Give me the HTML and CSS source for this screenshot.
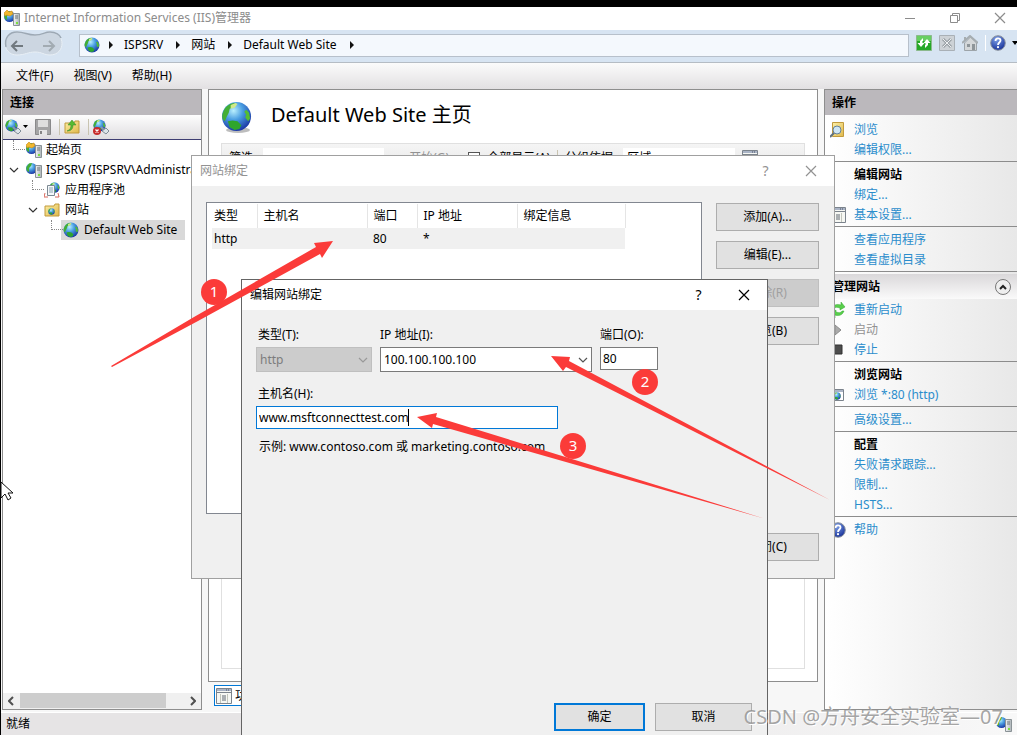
FILE: index.html
```html
<!DOCTYPE html>
<html lang="zh-CN">
<head>
<meta charset="utf-8">
<title>Internet Information Services (IIS)管理器</title>
<link rel="stylesheet" href="styles.css">
</head>
<body>
<svg class="defs" width="0" height="0" aria-hidden="true">
  <defs>
    <radialGradient id="sea" cx="40%" cy="30%" r="70%">
      <stop offset="0" stop-color="#b9effd"/><stop offset=".45" stop-color="#4a9fe2"/><stop offset="1" stop-color="#1c3aa6"/>
    </radialGradient>
    <linearGradient id="tower" x2="1"><stop offset="0" stop-color="#f2f4f5"/><stop offset="1" stop-color="#aab2b6"/></linearGradient>
    <linearGradient id="folder" y2="1"><stop offset="0" stop-color="#fdf0a6"/><stop offset="1" stop-color="#dfb84c"/></linearGradient>
    <radialGradient id="help" cx="40%" cy="25%" r="80%"><stop offset="0" stop-color="#7d9fe8"/><stop offset="1" stop-color="#132c94"/></radialGradient>
    <symbol id="globe" viewBox="0 0 32 32">
      <circle cx="16" cy="16" r="15" fill="url(#sea)"/>
      <path d="M2 12C4 6 8 3 13 2l3 1-2 3-5 2-1 4-2 4-2 5-2-2C1 17 1 14 2 12Z" fill="#43ae35"/>
      <path d="M7 21l5-1 5 1 4 4-2 4-5 1-5-3Z" fill="#2fa62d"/>
      <path d="M26 9l3 3 1 6-2 3-3-4 1-3-2-3Z" fill="#54bd32"/>
      <path d="M10 4l5-2 2 1-3 4-4 1Z" fill="#cfe98a"/>
    </symbol>
    <symbol id="server" viewBox="0 0 16 16">
      <circle cx="5.500" cy="6.500" r="5.500" fill="url(#sea)"/>
      <path d="M.5 5 3 1.500l3-.5-1 3-2 2 0 4C1 9 0 8 .5 5Z" fill="#43ae35"/>
      <path d="M9.500 3.500h6v12h-6Z" fill="url(#tower)" stroke="#8a9296"/>
      <path d="M11 6h3M11 8h3" stroke="#6e777b"/><path d="M12 13h2" stroke="#7be03d" stroke-width="2"/>
    </symbol>
    <symbol id="start" viewBox="0 0 16 16">
      <use href="#server"/><path d="M0 3 3 0l2 2 3-1 1 3-3 2-3-1-2 1Z" fill="#f1b82e" stroke="#c78613" stroke-width=".6"/>
    </symbol>
    <symbol id="folder-icon" viewBox="0 0 16 16">
      <path d="M1 4h9l1-2h4v12H1Z" fill="url(#folder)" stroke="#c19a3d"/>
    </symbol>
    <symbol id="help-icon" viewBox="0 0 16 16">
      <circle cx="8" cy="8" r="7.300" fill="url(#help)" stroke="#8b929d"/>
      <path d="M5.500 6c0-3.500 5-3.500 5-.5C10.500 7.500 8 7.500 8 10" fill="none" stroke="#fff" stroke-width="1.800"/><circle cx="8" cy="12.200" r="1.100" fill="#fff"/>
    </symbol>
    <symbol id="window-icon" viewBox="0 0 16 16">
      <path d="M.5.500h15v15H.5Z" fill="#f6f7f3" stroke="#7b838c"/><path d="M1 2h14" stroke="#aab4c6" stroke-width="2"/>
      <path d="M1 4.500h14" stroke="#7b838c"/><path d="M4.500 6v9M11.500 6v9" stroke="#c2c5bb"/><path d="M6 8h4M6 10h4M6 12h4" stroke="#5e6670"/>
      <path d="M10 2h1M12 2h1" stroke="#4a5365"/>
    </symbol>
    <symbol id="connect" viewBox="0 0 16 16">
      <use href="#globe" width="13" height="13"/><path d="M8 8l4 4" stroke="#8c9aa5" stroke-width="2"/><path d="M9 12l4-3 3 3-3 3Z" fill="#dce4e9" stroke="#7f8c97"/>
    </symbol>
    <symbol id="chevron" viewBox="0 0 10 6"><path d="M1 1l4 4 4-4" fill="none" stroke="currentColor" stroke-width="1.200"/></symbol>
    <symbol id="close" viewBox="0 0 12 12"><path d="M1 1l10 10M11 1 1 11" stroke="currentColor" stroke-width="1.200"/></symbol>
    <symbol id="tri" viewBox="0 0 5 8"><path d="M1 0v8l4-4Z" fill="#111"/></symbol>
  </defs>
</svg>

<div class="screen">
<main class="app">
  <header class="titlebar">
    <svg class="i16"><use href="#start"/></svg>
    <h1>Internet Information Services (IIS)管理器</h1>
    <div class="window-tools">
      <button aria-label="最小化"><svg width="12" height="12"><path d="M1 6.500h10" stroke="currentColor"/></svg></button>
      <button aria-label="还原"><svg width="12" height="12"><path d="M1.500 3.500h7v7h-7ZM3.500 3V1.500h7v7H9" fill="none" stroke="currentColor"/></svg></button>
      <button aria-label="关闭"><svg width="12" height="12"><use href="#close"/></svg></button>
    </div>
  </header>
  <nav class="addressbar">
    <svg class="travel" width="62" height="30">
      <path d="M14 2c8 0 10 3 18 3s9-3 15-3c16 0 16 23 0 23-6 0-8-3-15-3s-10 3-18 3C-2 25-2 2 14 2Z" fill="#ccd6e1" stroke="#e9f0f6"/>
      <path d="M3 17C1 8 6 2 14 2c8 0 10 3 18 3s9-3 15-3c6 0 10 3 11 6" fill="none" stroke="#9ca8b4" stroke-width="1.500"/>
      <path d="M20 16H9M14 11l-5 5 5 5" fill="none" stroke="#71797f" stroke-width="2"/>
      <path d="M40 16h11M46 11l5 5-5 5" fill="none" stroke="#a2abb2" stroke-width="2"/>
    </svg>
    <div class="crumbs">
      <svg class="i16"><use href="#globe"/></svg>
      <svg class="tri"><use href="#tri"/></svg><span>ISPSRV</span>
      <svg class="tri"><use href="#tri"/></svg><span>网站</span>
      <svg class="tri"><use href="#tri"/></svg><span>Default Web Site</span>
      <svg class="tri"><use href="#tri"/></svg>
    </div>
    <div class="nav-tools">
      <button aria-label="刷新"><svg class="i16" viewBox="0 0 16 16"><path d="M.5.500h15v15H.5Z" fill="#25a829" stroke="#8bb98c"/><path d="M1 1h14v5H1Z" fill="#68cf62"/><path d="M7 3 4 6v2H1.500l3.500 4 3.500-4H6.500V6H7ZM9 13l3-3V8h2.500L11 4 7.500 8h2v2H9Z" fill="#fff"/></svg></button>
      <button aria-label="停止"><svg class="i16" viewBox="0 0 16 16"><path d="M.5.500h15v15H.5Z" fill="#cdd2d6" stroke="#a9b0b6"/><path d="M4 4l8 8M12 4l-8 8" stroke="#9ba2a7" stroke-width="3"/><path d="M4 4l8 8M12 4l-8 8" stroke="#eef0f1"/></svg></button>
      <button aria-label="主页"><svg class="i16" viewBox="0 0 16 16"><path d="M2.500 8v7.500h12V8L8.500 2Z" fill="#d4d7d9" stroke="#9da4a9"/><path d="M0 8 8 1l8 7M3 2v4" fill="none" stroke="#a6adb1" stroke-width="2"/><path d="M10 9h3v6h-3ZM5 9h3v3H5Z" fill="#8e9599"/></svg></button>
      <span class="tool-line"></span>
      <button class="help-button" aria-label="帮助"><svg class="i16"><use href="#help-icon"/></svg><svg width="7" height="4"><path d="M0 0h6L3 4Z"/></svg></button>
    </div>
  </nav>
  <div class="menubar"><button>文件(F)</button><button>视图(V)</button><button>帮助(H)</button></div>

  <div class="workspace">
    <section class="panel connections">
      <h2>连接</h2>
      <div class="toolbar">
        <svg class="i16"><use href="#connect"/></svg><svg class="drop" width="6" height="4"><path d="M0 0h5L2.500 3Z"/></svg>
        <svg class="i16 save" viewBox="0 0 16 16"><path d="M.5.500h15v15H.5Z" fill="#a4a4a5" stroke="#89898a"/><path d="M3 1h10v7H3Z" fill="#dedede"/><path d="M4 11h8v5H4Z" fill="#e6e6e6"/><path d="M6 12v3" stroke="#858586" stroke-width="2"/></svg>
        <span class="tool-line"></span>
        <svg class="i16" viewBox="0 0 16 16"><use href="#folder-icon"/><path d="M3 12c3-1 4-3 4-6H4l4-5 4 5h-3c0 4-2 6-6 6Z" fill="#55bb31" stroke="#37852a" stroke-width=".5"/></svg>
        <span class="tool-line wide"></span>
        <svg class="i16" viewBox="0 0 16 16"><use href="#connect"/><circle cx="4" cy="12" r="4" fill="#c72c2c"/><path d="M2.500 10.500l3 3M5.500 10.500l-3 3" stroke="#fff" stroke-width="1.300"/></svg>
      </div>
      <div class="tree">
        <div class="tree-row level-0"><i></i><svg class="i16"><use href="#start"/></svg><span>起始页</span></div>
        <div class="tree-row level-0"><svg class="expander"><use href="#chevron"/></svg><svg class="i16"><use href="#server"/></svg><span>ISPSRV (ISPSRV\Administrator)</span></div>
        <div class="tree-row level-1"><i></i><svg class="i16" viewBox="0 0 16 16"><use href="#globe" x="5" width="11" height="11"/><path d="M3.500 3.500h7v10h-7Z" fill="#f5f8fa" stroke="#7c8992"/><path d="M5 6h4M5 8h4M5 10h4" stroke="#88a1b2"/><path d="M1 11l-1 4h4M14 11l1 4h-4" fill="none" stroke="#d9685c"/></svg><span>应用程序池</span></div>
        <div class="tree-row level-1"><svg class="expander"><use href="#chevron"/></svg><svg class="i16" viewBox="0 0 16 16"><use href="#folder-icon"/><use href="#globe" x="4" y="6" width="7" height="7"/></svg><span>网站</span></div>
        <div class="tree-row level-2 selected"><i></i><svg class="i16"><use href="#globe"/></svg><span>Default Web Site</span></div>
      </div>
      <div class="hscroll"><svg viewBox="0 0 6 10"><path d="M5 1 1 5l4 4" fill="none" stroke="#505050" stroke-width="2"/></svg><span></span><svg viewBox="0 0 6 10"><path d="m1 1 4 4-4 4" fill="none" stroke="#505050" stroke-width="2"/></svg></div>
    </section>

    <section class="center">
      <div class="panel home">
        <div class="home-title"><svg width="32" height="32"><ellipse cx="17" cy="29" rx="12" ry="3" fill="#bdbdbd"/><use href="#globe" width="31" height="31"/></svg><h2>Default Web Site 主页</h2></div>
        <div class="features">
          <div class="filter">
            <label for="filter">筛选:</label><input id="filter">
            <svg class="go-icon" width="14" height="8"><path d="M0 1h13v6H0Z" fill="#a9a9a9"/></svg><span class="muted go">开始(G)</span><i class="box"></i><span>全部显示(A)</span><span class="tool-line"></span><span>分组依据:</span><span class="group">区域</span><svg class="i16"><use href="#window-icon"/></svg>
          </div>
        </div>
      </div>
      <button class="view-tab"><svg class="i16"><use href="#window-icon"/></svg>功能视图</button>
    </section>

    <aside class="panel actions">
      <h2>操作</h2>
      <div class="action-list">
        <a class="row" href="#"><svg class="i16" viewBox="0 0 16 16"><path d="M2.500.500h11v14h-11Z" fill="url(#folder)" stroke="#c19a3d"/><circle cx="7" cy="8" r="4" fill="#cfe6f3" stroke="#64819a"/><path d="m4 11-4 4" stroke="#60717e" stroke-width="2"/></svg>浏览</a>
        <a class="row" href="#"><i></i>编辑权限...</a>
        <hr>
        <h3 class="row"><i></i>编辑网站</h3>
        <a class="row" href="#"><i></i>绑定...</a>
        <a class="row" href="#"><svg class="i16"><use href="#window-icon"/></svg>基本设置...</a>
        <hr>
        <a class="row" href="#"><i></i>查看应用程序</a>
        <a class="row" href="#"><i></i>查看虚拟目录</a>
        <hr>
        <div class="manage"><h3>管理网站</h3><button aria-label="折叠"><svg width="8" height="6" viewBox="0 0 8 6"><path d="m1 5 3-3 3 3" fill="none" stroke="#222" stroke-width="2"/></svg></button></div>
        <a class="row" href="#"><svg class="i16" viewBox="0 0 16 16"><path d="M2 6c2-4 6-4 9-3V0l4 5-5 3V6C7 5 5 5 4 7ZM14 9c-2 5-6 5-9 4v3L1 11l5-3v2c3 1 5 1 6-1Z" fill="#58cf4b" stroke="#32a52f" stroke-width=".5"/></svg>重新启动</a>
        <span class="row muted"><svg class="i16" viewBox="0 0 16 16"><path d="M5 3v10l6-5Z" fill="#aaa" stroke="#8b8b8b"/></svg>启动</span>
        <a class="row" href="#"><svg class="i16" viewBox="0 0 16 16"><path d="M3 3h9v9H3Z" fill="#4d4d4d" stroke="#333"/></svg>停止</a>
        <hr>
        <h3 class="row"><i></i>浏览网站</h3>
        <a class="row" href="#"><svg class="i16" viewBox="0 0 16 16"><path d="M-.5 2.500h14v11h-14Z" fill="#fff" stroke="#7b838c"/><path d="M0 4h13" stroke="#aab4c6" stroke-width="2"/><use href="#globe" x="3" y="5" width="8" height="8"/></svg>浏览 *:80 (http)</a>
        <hr>
        <a class="row" href="#"><i></i>高级设置...</a>
        <hr>
        <h3 class="row"><i></i>配置</h3>
        <a class="row" href="#"><i></i>失败请求跟踪...</a>
        <a class="row" href="#"><i></i>限制...</a>
        <a class="row" href="#"><i></i>HSTS...</a>
        <hr>
        <a class="row" href="#"><svg class="i16"><use href="#help-icon"/></svg>帮助</a>
      </div>
    </aside>
  </div>
  <footer class="status"><span>就绪</span><svg class="i16"><use href="#server"/></svg></footer>
</main>

<section class="dialog bindings" role="dialog" aria-labelledby="bindings-title">
  <header><h2 id="bindings-title">网站绑定</h2><button>?</button><button aria-label="关闭"><svg width="12" height="12"><use href="#close"/></svg></button></header>
  <div class="bindings-body">
    <div class="listview">
      <table>
        <colgroup><col class="c-type"><col class="c-host"><col class="c-port"><col class="c-ip"><col class="c-info"></colgroup>
        <thead><tr><th>类型</th><th>主机名</th><th>端口</th><th>IP 地址</th><th>绑定信息</th></tr></thead>
        <tbody><tr><td>http</td><td></td><td>80</td><td>*</td><td></td></tr></tbody>
      </table>
    </div>
    <div class="side-buttons">
      <button>添加(A)...</button><button>编辑(E)...</button><button disabled>删除(R)</button><button>浏览(B)</button><button class="last">关闭(C)</button>
    </div>
  </div>
</section>

<section class="dialog edit" role="dialog" aria-labelledby="edit-title">
  <header><h2 id="edit-title">编辑网站绑定</h2><button>?</button><button aria-label="关闭"><svg width="12" height="12"><use href="#close"/></svg></button></header>
  <form class="edit-form">
    <div class="fields">
      <div class="field type"><label for="type">类型(T):</label><div class="combo"><select id="type" disabled><option>http</option></select><svg><use href="#chevron"/></svg></div></div>
      <div class="field ip"><label for="ip">IP 地址(I):</label><div class="combo"><select id="ip"><option>100.100.100.100</option></select><svg><use href="#chevron"/></svg></div></div>
      <div class="field port"><label for="port">端口(O):</label><input id="port" value="80"></div>
    </div>
    <div class="field host"><label for="host">主机名(H):</label><input id="host" value="www.msftconnecttest.com"></div>
    <p>示例: www.contoso.com 或 marketing.contoso.com</p>
    <div class="form-buttons"><button class="primary" type="button">确定</button><button type="button">取消</button></div>
  </form>
</section>

<svg class="marks" width="1017" height="735">
  <path d="M408.500 409v17" stroke="#000"/>
  <g fill="#fb3b39">
    <path d="M111 366 194 317 316 247 314 243 333 241 322 258 320 254 198 321 112 367Z"/>
    <path d="M830 500 566 367 563 371 551 356 570 357 569 361Z"/>
    <path d="M766 519 433 424 432 428 417 417 437 413 436 417Z"/>
    <circle cx="214" cy="292" r="13"/><circle cx="645" cy="382" r="13"/><circle cx="573" cy="446" r="13"/>
  </g>
  <g class="digits"><text x="214" y="297">1</text><text x="645" y="387">2</text><text x="573" y="451">3</text></g>
  <path d="M1 482v16l4-4 3 6 3-2-3-5h5Z" fill="#fff" stroke="#111"/>
</svg>
<div class="watermark">CSDN @方舟安全实验室—07</div>
</div>
</body>
</html>
```
FILE: styles.css
```css
* { box-sizing: border-box; }
body { margin: 0; background: #000; color: #000; font: 12px/20px "Noto Sans", "Noto Sans CJK SC", sans-serif; }
h1, h2, h3, p { margin: 0; font-size: 12px; font-weight: 400; }
button, input, select { font: inherit; color: inherit; margin: 0; }
button { padding: 0; border: 0; background: none; }
svg { flex: none; display: block; }
.defs { position: absolute; }
.i16 { width: 16px; height: 16px; }
.screen { position: relative; height: 100vh; overflow: hidden; padding: 7px 0 0 1px; }
.app { height: 100%; display: flex; flex-direction: column; background: #f7f7f7; }

.titlebar { height: 23px; flex: none; display: flex; align-items: center; gap: 4px; padding: 0 11px 2px 3px; background: #fff; color: #8c8c8c; }
.titlebar h1 { font-size: 12px; }
.window-tools { margin-left: auto; display: flex; gap: 33px; }

.addressbar { height: 33px; flex: none; display: flex; align-items: center; gap: 14px; padding: 0 0 2px 2px; background: #d7e4f2; border-bottom: 1px solid #b5bcc4; }
.crumbs { flex: 1; height: 23px; display: flex; align-items: center; padding-left: 4px; background: #f4f8fd; border: 1px solid #b7c0cb; white-space: nowrap; }
.crumbs .tri { width: 5px; height: 8px; margin: 0 11px 0 12px; }
.crumbs .i16 + .tri { margin-left: 8px; }
.addressbar .nav-tools { display: flex; align-items: center; gap: 7px; margin: 0 -2px 0 -7px; padding-bottom: 4px; }
.help-button { display: flex; align-items: center; gap: 6px; margin-left: -3px; }
.tool-line { width: 1px; height: 16px; background: #c9c4b1; }
.nav-tools .tool-line { background: #fff; }
.menubar { height: 26px; flex: none; display: flex; gap: 20px; padding-left: 15px; background: linear-gradient(#fbfbfb, #e2e0e2); }

.workspace { flex: 1; min-height: 0; display: flex; gap: 6px; padding: 0 0 2px 1px; }
.panel { background: #fff; border: 1px solid #8e8e8e; }
.panel > h2 { height: 25px; flex: none; padding-left: 7px; line-height: 25px; font-weight: 700; background: #bbb8bc; }
.connections { width: 200px; flex: none; display: flex; flex-direction: column; overflow: hidden; }
.toolbar { height: 25px; flex: none; display: flex; align-items: center; padding-left: 2px; background: linear-gradient(#fdfdfd, #dfdde0); border-bottom: 1px solid #3d3d72; }
.toolbar .drop { margin: 0 6px 0 2px; }
.toolbar .tool-line { margin: 0 4px 0 8px; }
.toolbar .tool-line.wide { margin-left: 8px; }
.tree { flex: 1; overflow: hidden; }
.tree-row { height: 20px; display: flex; align-items: center; white-space: nowrap; }
.tree-row span { padding: 0 5px; }
.tree-row i { width: 12px; height: 10px; margin: -10px 0 0 10px; border: dotted #888; border-width: 0 0 1px 1px; }
.tree-row .expander { width: 10px; height: 6px; margin: 0 6px; color: #333; }
.level-0 .i16 { margin-left: 1px; }
.level-0 span { padding-left: 4px; }
.level-1 { padding-left: 19px; }
.level-2 { padding-left: 38px; }
.level-2.selected { width: 182px; background: linear-gradient(90deg, #fff 58px, #d9d9d9 58px); }
.hscroll { height: 16px; flex: none; display: flex; align-items: center; gap: 6px; padding: 0 5px 1px; background: #f0f0f0; }
.hscroll svg { width: 6px; height: 10px; }
.hscroll span { width: 146px; height: 15px; background: #cdcdcd; }
.hscroll svg:last-child { margin-left: auto; }

.center { flex: 1; min-width: 0; display: flex; flex-direction: column; align-items: flex-start; gap: 3px; padding-bottom: 4px; }
.home { flex: 1; width: 100%; display: flex; flex-direction: column; padding: 0 12px 12px; }
.home-title { height: 53px; display: flex; align-items: center; gap: 18px; }
.home-title h2 { padding-bottom: 4px; font-size: 20px; }
.features { flex: 1; border: 1px solid #e0e0e0; }
.filter { height: 28px; display: flex; align-items: center; gap: 7px; padding-left: 7px; background: linear-gradient(#f5f5f5, #e7e7e7); white-space: nowrap; }
.filter input { width: 121px; height: 20px; border: 0; }
.filter .go { margin: 0 12px 0 -3px; }
.filter .box { width: 12px; height: 12px; background: #fff; border: 1px solid #555; }
.filter .group { width: 112px; padding-left: 4px; background: #fff; }
.view-tab { height: 21px; display: flex; align-items: center; gap: 3px; margin-left: 6px; padding: 0 6px 0 1px; background: #fff; border: 1px solid #0078d7; }

.actions { width: 193px; flex: none; border-right: 0; display: flex; flex-direction: column; }
.action-list { flex: 1; padding-top: 4px; background: linear-gradient(90deg, #fff, #e8e8e8); }
.row { height: 20px; display: flex; align-items: center; gap: 8px; padding: 1px 0 0 5px; text-decoration: none; color: #2b8dcc; white-space: nowrap; }
.row i { width: 16px; }
h3 { color: #000; font-weight: 700; }
h3.row { color: #000; font-weight: 700; }
.muted { color: #929292; }
.actions hr { height: 1px; margin: 2px 0; border: 0; background: #8c8c8c; }
.manage { height: 25px; display: flex; align-items: center; justify-content: space-between; padding: 0 6px 0 7px; background: linear-gradient(#dad8da, #fafafa); }
.manage button { width: 16px; height: 16px; display: grid; place-items: center; border: 1px solid #777; border-radius: 50%; background: #eee; }
.status { height: 23px; flex: none; display: flex; align-items: center; justify-content: space-between; padding: 0 5px; background: linear-gradient(90deg, #e6e4e5 45%, #f8f8f8); border-top: 1px solid #fff; }

.dialog { position: absolute; background: #f0f0f0; border: 1px solid #a0a0a0; display: flex; flex-direction: column; }
.dialog > header { height: 30px; flex: none; display: flex; align-items: center; padding: 0 1px 1px 8px; background: #fff; }
.dialog > header h2 { flex: 1; }
.dialog > header button { width: 45px; display: grid; place-items: center; font-size: 14px; }
.bindings { left: 191px; top: 155px; width: 644px; height: 424px; }
.bindings > header { color: #929292; }
.bindings-body { flex: 1; display: flex; gap: 14px; padding: 17px 15px 17px 14px; }
.listview { flex: 1; margin: -1px 0 47px; padding: 1px 5px; background: #fff; border: 1px solid #828790; }
.listview table { table-layout: fixed; width: 413px; border-collapse: collapse; }
.c-type { width: 45px; }
.c-host { width: 110px; }
.c-port { width: 50px; }
.c-ip { width: 100px; }
.c-info { width: 108px; }
.listview th { height: 24px; padding: 0 6px; border-right: 1px solid #e5e5e5; text-align: left; font-weight: 400; }
.listview th:first-child, .listview td:first-child { padding-left: 2px; }
.listview td { height: 21px; padding: 0 6px; background: #f0f0f0; line-height: 20px; }
.side-buttons { width: 103px; display: flex; flex-direction: column; gap: 10px; }
.side-buttons button, .form-buttons button { height: 28px; flex: none; background: #e1e1e1; border: 1px solid #adadad; }
.side-buttons button:disabled { color: #a0a0a0; background: #ccc; border-color: #bfbfbf; }
.side-buttons .last { margin-top: auto; }

.edit { left: 241px; top: 279px; width: 527px; height: 470px; border-color: #646464; }
.edit-form { height: 421px; flex: none; display: flex; flex-direction: column; padding: 15px 15px 0 14px; }
.fields { display: flex; gap: 8px; }
.field { display: flex; flex-direction: column; align-items: stretch; gap: 2px; }
.field label { padding-left: 2px; }
.type { width: 116px; }
.ip { width: 212px; }
.ip label, .port label { padding-left: 0; }
.port { width: 58px; }
.host { width: 302px; margin-top: 12px; }
.combo { position: relative; }
.combo select { appearance: none; width: 100%; height: 25px; display: block; padding: 0 3px; background: #fff; border: 1px solid #7a7a7a; border-radius: 0; }
.combo select:disabled { color: #7c7c7c; background: #ccc; border-color: #bfbfbf; opacity: 1; }
.combo svg { position: absolute; right: 4px; top: 10px; width: 10px; height: 6px; color: #555; }
.combo select:disabled + svg { color: #999; }
.field input { height: 23px; padding: 0 2px; background: #fff; border: 1px solid #7a7a7a; }
.host input { border-color: #0078d7; }
.edit-form p { margin: 8px 0 0 3px; }
.form-buttons { display: flex; justify-content: flex-end; gap: 10px; margin-top: auto; }
.form-buttons button { width: 97px; }
.form-buttons .primary { width: 91px; border: 2px solid #0078d7; }

.marks { position: absolute; left: 0; top: 0; pointer-events: none; }
.digits { fill: #fff; font-size: 15px; text-anchor: middle; }
.watermark { position: absolute; right: 14px; bottom: 4px; font-size: 20px; line-height: 28px; color: #8e8e8ecc; text-shadow: 1px 1px #fff; white-space: nowrap; }
```
